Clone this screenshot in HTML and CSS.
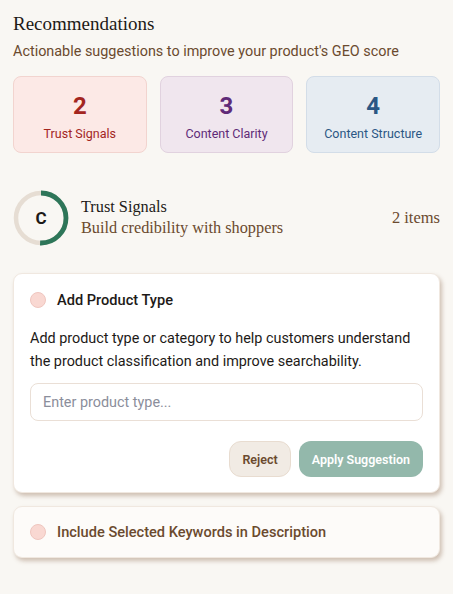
FILE: index.html
```html
<!DOCTYPE html>
<html>
<head>
<meta charset="utf-8">
<link rel="stylesheet" href="styles.css">
</head>
<body>
<main class="page">
  <header class="head">
    <h1 class="title">Recommendations</h1>
    <p class="subtitle">Actionable suggestions to improve your product's GEO score</p>
  </header>

  <section class="stats">
    <div class="stat stat-trust"><div class="num">2</div><div class="lbl">Trust Signals</div></div>
    <div class="stat stat-clarity"><div class="num">3</div><div class="lbl">Content Clarity</div></div>
    <div class="stat stat-structure"><div class="num">4</div><div class="lbl">Content Structure</div></div>
  </section>

  <section class="group">
    <div class="gauge">
      <svg width="56" height="56" viewBox="0 0 56 56">
        <circle cx="28" cy="28" r="25" fill="none" stroke="#e6ddd3" stroke-width="4.5"/>
        <circle cx="28" cy="28" r="25" fill="none" stroke="#2e7659" stroke-width="4.8" stroke-dasharray="79 200" transform="rotate(-90 28 28)"/>
      </svg>
      <span class="grade">C</span>
    </div>
    <div class="group-text">
      <div class="group-title">Trust Signals</div>
      <div class="group-sub">Build credibility with shoppers</div>
    </div>
    <div class="group-count">2 items</div>
  </section>

  <article class="card open">
    <div class="card-head">
      <span class="dot"></span>
      <span class="card-title">Add Product Type</span>
    </div>
    <p class="card-desc">Add product type or category to help customers understand the product classification and improve searchability.</p>
    <input class="field" type="text" placeholder="Enter product type...">
    <div class="actions">
      <button class="btn btn-reject">Reject</button>
      <button class="btn btn-apply">Apply Suggestion</button>
    </div>
  </article>

  <article class="card closed">
    <div class="card-head">
      <span class="dot"></span>
      <span class="card-title brown">Include Selected Keywords in Description</span>
    </div>
  </article>
</main>
</body>
</html>
```
FILE: styles.css
```css
* { box-sizing: border-box; }
html, body { margin: 0; padding: 0; }
body {
  background: #f9f7f3;
  font-family: Roboto, "Noto Sans", sans-serif;
  color: #1d1a17;
}
.page {
  padding: 12px 13px 20px;
  display: flex;
  flex-direction: column;
}
.title {
  margin: 0;
  font-family: "Liberation Serif", "DejaVu Serif", serif;
  font-weight: 400;
  font-size: 19px;
  line-height: 24px;
  color: #1d1a17;
}
.subtitle {
  margin: 7px 0 0;
  font-size: 14.4px;
  line-height: 18px;
  color: #6b4a2e;
}
.stats {
  margin-top: 15px;
  display: grid;
  grid-template-columns: 1fr 1fr 1fr;
  gap: 13px;
}
.stat {
  height: 77px;
  border-radius: 8px;
  border: 1px solid;
  display: flex;
  flex-direction: column;
  align-items: center;
  padding-top: 14px;
}
.num {
  font-size: 24px;
  font-weight: 700;
  line-height: 30px;
}
.lbl {
  margin-top: 5px;
  font-size: 12.5px;
  line-height: 16px;
}
.stat-trust { background: #fce9e6; border-color: #f2d4cf; color: #a3261f; }
.stat-clarity { background: #f0e6ee; border-color: #e1d2df; color: #5f2b78; }
.stat-structure { background: #e6ecf2; border-color: #d3dde8; color: #2b5784; }

.group {
  margin-top: 37px;
  display: flex;
  align-items: center;
}
.gauge {
  position: relative;
  width: 56px;
  height: 56px;
  flex: none;
}
.gauge svg { display: block; }
.grade {
  position: absolute;
  inset: 0;
  display: flex;
  align-items: center;
  justify-content: center;
  font-size: 17px;
  font-weight: 700;
  color: #1d1a17;
}
.group-text {
  margin-left: 12px;
  flex: 1;
  font-family: "Liberation Serif", "DejaVu Serif", serif;
}
.group-title { font-size: 16.3px; line-height: 20px; color: #1d1a17; }
.group-sub { font-size: 16.3px; line-height: 22px; color: #6b4a2e; }
.group-count {
  font-family: "Liberation Serif", "DejaVu Serif", serif;
  font-size: 16.5px;
  color: #6b4a2e;
}

.card {
  background: #ffffff;
  border: 1px solid #f0e8e0;
  border-radius: 9px;
  box-shadow: 2px 3px 4px rgba(130, 90, 60, 0.35);
}
.card.open {
  margin-top: 27px;
  padding: 16px 16px 15px;
}
.card.closed {
  margin-top: 13px;
  padding: 15px 16px;
  background: #fdfbf9;
}
.card-head {
  display: flex;
  align-items: center;
  gap: 11px;
}
.dot {
  width: 16px;
  height: 16px;
  border-radius: 50%;
  background: #f9d8d2;
  border: 1px solid #efc6bf;
  flex: none;
}
.card-title {
  font-size: 14.6px;
  font-weight: 500;
  line-height: 20px;
  color: #1d1a17;
}
.card-title.brown { color: #6b4a2e; }
.card-desc {
  margin: 17px 0 0;
  font-size: 14.4px;
  line-height: 23px;
  color: #1d1a17;
}
.field {
  display: block;
  width: 100%;
  margin-top: 10px;
  height: 38px;
  border: 1px solid #eadfd6;
  border-radius: 8px;
  padding: 0 12px;
  font-family: inherit;
  font-size: 14.4px;
  background: #fff;
}
.field::placeholder { color: #8b8e9b; }
.actions {
  margin-top: 20px;
  display: flex;
  justify-content: flex-end;
  gap: 8px;
}
.btn {
  height: 36px;
  border-radius: 12px;
  font-family: inherit;
  font-size: 12.5px;
  font-weight: 600;
  padding: 0 12px;
  border: 1px solid transparent;
}
.btn-reject {
  background: #f1ebe4;
  border-color: #e8dcd0;
  color: #6b4a2e;
}
.btn-apply {
  background: #93b8ab;
  color: #ffffff;
}
```
